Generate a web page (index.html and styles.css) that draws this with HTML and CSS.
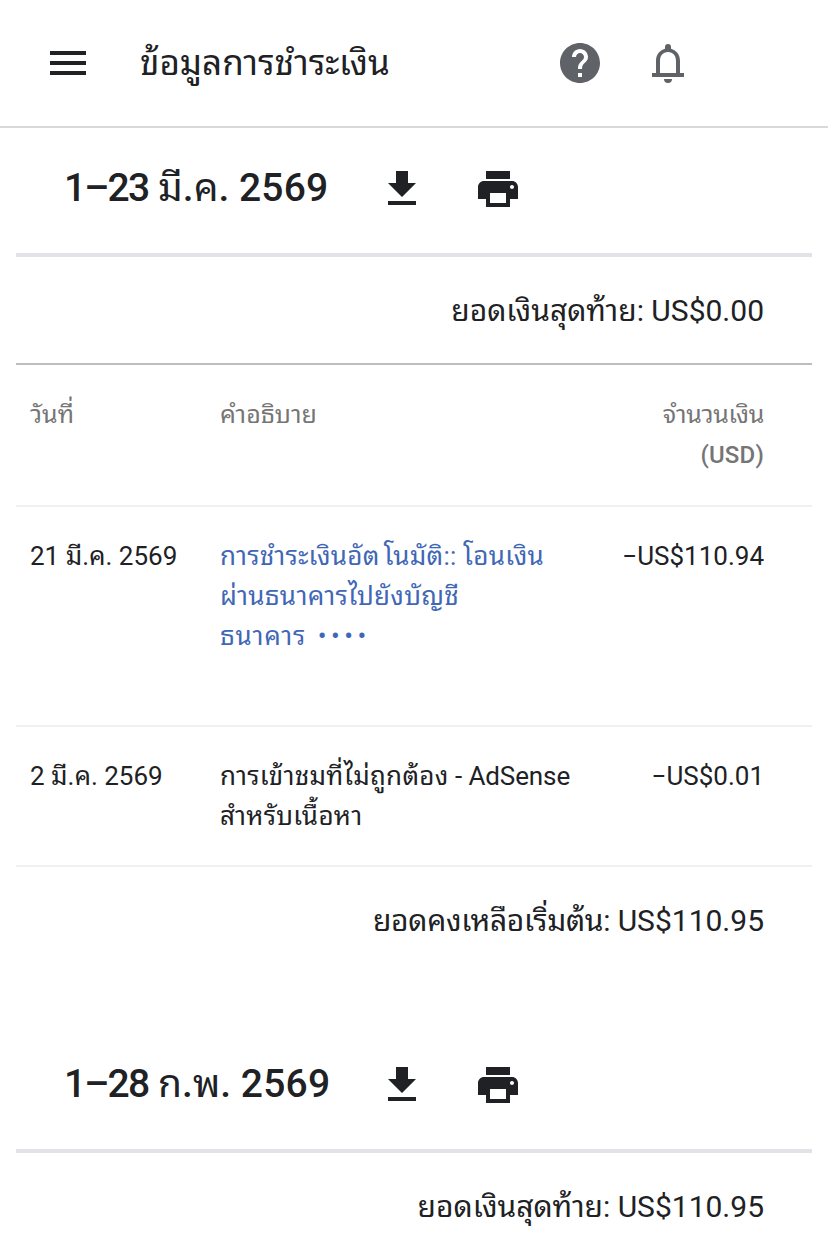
FILE: index.html
```html
<!DOCTYPE html>
<html lang="th">
<head>
    <meta charset="UTF-8">
    <meta name="viewport" content="width=device-width, initial-scale=1.0">
    <title>ข้อมูลการชำระเงิน</title>
    <link rel="stylesheet" href="styles.css">
</head>
<body>
    <header class="topbar">
        <svg class="menu" viewBox="0 0 36 24"><path d="M0 0h36v4H0zM0 10h36v4H0zM0 20h36v4H0z"/></svg>
        <h1>ข้อมูลการชำระเงิน</h1>
        <svg class="help" viewBox="2 2 20 20"><path d="M12 2C6.48 2 2 6.48 2 12s4.480 10 10 10 10-4.480 10-10S17.520 2 12 2zm1 17h-2v-2h2v2zm2.070-7.750l-.9.920C13.450 12.900 13 13.500 13 15h-2v-.5c0-1.100.45-2.100 1.170-2.830l1.240-1.260c.37-.36.59-.86.59-1.410 0-1.100-.9-2-2-2s-2 .9-2 2H8c0-2.210 1.790-4 4-4s4 1.790 4 4c0 .88-.36 1.680-.93 2.250z"/></svg>
        <svg class="bell" viewBox="0 0 32 39"><path fill-rule="evenodd" d="M0 29h4V17C4 10.500 7.500 6.300 13 4.700V3a3 3 0 0 1 6 0v1.700C24.500 6.300 28 10.500 28 17v12h4v4H0zM8 29h16V17c0-5.500-3-9-8-9s-8 3.500-8 9zM12 35h8a4 4 0 0 1-8 0z"/></svg>
    </header>

    <section class="statement">
        <div class="period">
            <h2><span class="days">1–23</span> <span class="month">มี</span>.<span class="month">ค</span>. <span class="year">2569</span></h2>
            <svg class="download" viewBox="5 3 14 17"><path d="M19 9h-4V3H9v6H5l7 7 7-7zM5 18v2h14v-2H5z"/></svg>
            <svg class="print" viewBox="2 3 20 18"><path d="M19 8H5c-1.660 0-3 1.340-3 3v6h4v4h12v-4h4v-6c0-1.660-1.340-3-3-3zm-3 11H8v-5h8v5zm3-7c-.55 0-1-.45-1-1s.45-1 1-1 1 .45 1 1-.45 1-1 1zm-1-9H6v4h12V3z"/></svg>
        </div>
        <div class="balance">ยอดเงินสุดท้าย: US$0.00</div>
        <div class="row head">
            <div>วันที่</div>
            <div>คำอธิบาย</div>
            <div class="amount"><span class="label">จำนวนเงิน</span><br><span class="currency">(USD)</span></div>
        </div>
        <div class="row payment">
            <div>21 มี.ค. 2569</div>
            <div class="description link"><span class="gap">การชำระเงินอัต</span>โนมัติ:: โอนเงิน<br>ผ่านธนาคารไปยังบัญชี<br><span class="bank">ธนาคาร</span> <span class="dots">••••</span></div>
            <div class="amount">−US$110.94</div>
        </div>
        <div class="row">
            <div>2 มี.ค. 2569</div>
            <div class="description">การเข้าชมที่ไม่ถูกต้อง<span class="product"> - AdSense</span><br>สำหรับเนื้อหา</div>
            <div class="amount">−US$0.01</div>
        </div>
        <div class="balance opening"><span class="label">ยอดคงเหลือเริ่มต้น:</span> US$110.95</div>
    </section>

    <section class="statement">
        <div class="period">
            <h2><span class="days">1–28</span> <span class="month">ก</span>.<span class="month">พ</span>. <span class="year">2569</span></h2>
            <svg class="download" viewBox="5 3 14 17"><path d="M19 9h-4V3H9v6H5l7 7 7-7zM5 18v2h14v-2H5z"/></svg>
            <svg class="print" viewBox="2 3 20 18"><path d="M19 8H5c-1.660 0-3 1.340-3 3v6h4v4h12v-4h4v-6c0-1.660-1.340-3-3-3zm-3 11H8v-5h8v5zm3-7c-.55 0-1-.45-1-1s.45-1 1-1 1 .45 1 1-.45 1-1 1zm-1-9H6v4h12V3z"/></svg>
        </div>
        <div class="balance last">ยอดเงินสุดท้าย: US$110.95</div>
    </section>
</body>
</html>
```
FILE: styles.css
```css
* {
    box-sizing: border-box;
}
body {
    margin: 0;
    height: 1253px;
    overflow: hidden;
    background: #fff;
    color: #202124;
    font-family: Roboto, "Noto Sans Thai Looped", "Noto Looped Thai", Loma, Waree, Garuda, Umpush, "Noto Sans", sans-serif;
    font-size: 26px;
    line-height: 40px;
}
svg {
    display: block;
    flex: none;
    fill: #202124;
}
.topbar {
    display: flex;
    align-items: center;
    height: 128px;
    padding: 0 144px 0 50px;
    border-bottom: 2px solid #d8d9dd;
}
.menu {
    width: 36px;
    height: 24px;
}
h1 {
    flex: 1;
    margin: 2px 0 0 54px;
    font-size: 35px;
    font-weight: 400;
}
.help {
    width: 40px;
    height: 40px;
    fill: #5f6368;
}
.bell {
    width: 32px;
    height: 39px;
    margin-left: 52px;
    fill: #5f6368;
}
.statement {
    margin: 0 16px;
}
.period {
    display: flex;
    align-items: center;
    height: 129px;
    padding: 0 0 5px 48px;
    border-bottom: 4px solid #e2e3e7;
}
h2 {
    width: 324px;
    margin: 0;
    font-size: 39px;
    font-weight: 500;
    white-space: nowrap;
}
.days {
    letter-spacing: -1.8px;
}
.month {
    font-weight: 400;
}
.year {
    letter-spacing: 0.2px;
}
.download {
    width: 28px;
    height: 34px;
}
.print {
    width: 40px;
    height: 36px;
    margin: 2px 0 0 62px;
}
.balance {
    height: 108px;
    padding: 34px 48px 0 0;
    border-bottom: 2px solid #bdbdbd;
    font-size: 30px;
    text-align: right;
    white-space: nowrap;
}
.row {
    display: grid;
    grid-template-columns: 190px 370px 1fr;
    height: 140px;
    padding: 29px 48px 0 14px;
    border-bottom: 2px solid #f0f0f3;
    white-space: nowrap;
}
.head {
    height: 142px;
    padding-top: 30px;
    color: #757575;
    font-size: 25px;
}
.label {
    letter-spacing: -0.3px;
}
.currency {
    font-size: 24px;
    font-weight: 500;
    letter-spacing: 0.2px;
}
.payment {
    height: 220px;
}
.description {
    letter-spacing: 0.3px;
}
.link {
    color: #3f67b5;
}
.gap {
    margin-right: 4px;
}
.bank {
    letter-spacing: 0.8px;
}
.dots {
    margin-left: 5px;
    letter-spacing: 4.4px;
}
.product {
    letter-spacing: -0.1px;
}
.amount {
    text-align: right;
}
.opening {
    height: 157px;
    border: 0;
}
.last {
    border: 0;
}
```
